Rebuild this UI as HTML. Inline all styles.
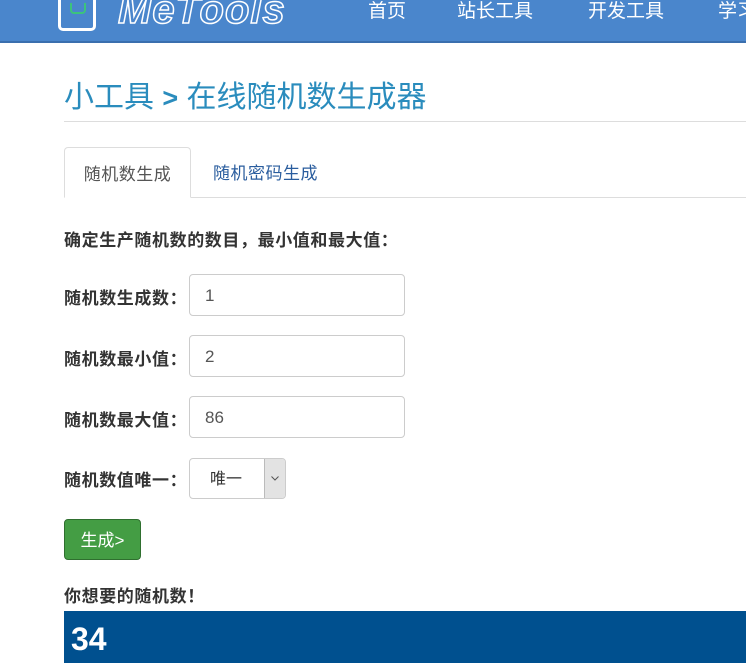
<!DOCTYPE html>
<html><head><meta charset="utf-8"><style>
body{margin:0;width:746px;height:663px;overflow:hidden;background:#fff;font-family:"Liberation Sans","Noto Sans CJK SC",sans-serif;color:#333;position:relative}
.hd{position:absolute;left:0;top:0;width:746px;height:41px;background:#4a86cc;border-bottom:2px solid #3a6fae;overflow:hidden}
.nav{position:absolute;top:0;color:#fff;font-size:19px;line-height:24px;white-space:nowrap}
.logo{position:absolute;left:58px;top:-8px;width:38px;height:39px;border:3px solid #fff;border-radius:5px;box-sizing:border-box}
.logo:after{content:"";position:absolute;left:9px;top:8px;width:12px;height:9px;border:2px solid #3cc47c;border-top:none;border-radius:0 0 4px 4px}
.lt{position:absolute;left:118px;top:-12px;color:#4a86cc;font-size:40px;font-weight:bold;font-style:italic;-webkit-text-stroke:1.5px #fff;letter-spacing:1px;white-space:nowrap}
h1{position:absolute;left:64px;top:72px;margin:0;font-weight:normal;font-size:30px;color:#2a8cbd;white-space:nowrap}
.hr{position:absolute;left:64px;top:121px;width:682px;height:1px;background:#ddd}
.tabline{position:absolute;left:64px;top:197px;width:682px;height:1px;background:#ddd}
.tab{position:absolute;top:147px;height:51px;box-sizing:border-box;font-size:17px;line-height:54px;text-align:center;letter-spacing:.5px}
.t1{left:64px;width:127px;border:1px solid #ddd;border-bottom:1px solid #fff;border-radius:4px 4px 0 0;background:#fff;color:#555}
.t2{left:213px;color:#2a5d9e}
.lb{position:absolute;left:64px;font-size:17px;font-weight:bold;color:#333;letter-spacing:.6px;white-space:nowrap}
.in{position:absolute;left:189px;width:216px;height:42px;border:1px solid #ccc;border-radius:4px;box-sizing:border-box;font-size:17px;line-height:42px;padding-left:15px;color:#555}
.sel{position:absolute;left:189px;top:458px;width:97px;height:41px;border:1px solid #ccc;border-radius:4px;box-sizing:border-box;font-size:16px;line-height:42px;padding-left:20px}
.arr{position:absolute;right:0;top:0;width:20px;height:39px;background:#e3e3e3;border-left:1px solid #bbb;border-radius:0 3px 3px 0}
.arr svg{position:absolute;left:6px;top:17px}
.btn{position:absolute;left:64px;top:519px;width:77px;height:41px;background:#449d44;border:1px solid #2f6f2f;border-radius:4px;box-sizing:border-box;color:#fff;font-size:17px;line-height:42px;text-align:center}
.res{position:absolute;left:64px;top:611px;width:682px;height:52px;background:#00508f;color:#fff;font-size:32px;font-weight:bold;line-height:56px;padding-left:7px;box-sizing:border-box}
</style></head><body>
<div class="hd">
<div class="logo"></div><div class="lt">MeTools</div>
<div class="nav" style="left:368px">首页</div>
<div class="nav" style="left:457px">站长工具</div>
<div class="nav" style="left:588px">开发工具</div>
<div class="nav" style="left:718px">学习</div>
</div>
<h1>小工具 <b style="font-size:27px">&gt;</b> 在线随机数生成器</h1>
<div class="hr"></div>
<div class="tabline"></div>
<div class="tab t1">随机数生成</div>
<div class="tab t2">随机密码生成</div>
<div class="lb" style="top:226px">确定生产随机数的数目，最小值和最大值：</div>
<div class="lb" style="top:284px">随机数生成数：</div><div class="in" style="top:274px">1</div>
<div class="lb" style="top:345px">随机数最小值：</div><div class="in" style="top:335px">2</div>
<div class="lb" style="top:406px">随机数最大值：</div><div class="in" style="top:396px">86</div>
<div class="lb" style="top:466px">随机数值唯一：</div><div class="sel">唯一<div class="arr"><svg width="8" height="5" viewBox="0 0 8 5"><path d="M0.5 0.5L4 4L7.5 0.5" fill="none" stroke="#555" stroke-width="1"/></svg></div></div>
<div class="btn">生成&gt;</div>
<div class="lb" style="top:582px">你想要的随机数！</div>
<div class="res">34</div>
</body></html>
